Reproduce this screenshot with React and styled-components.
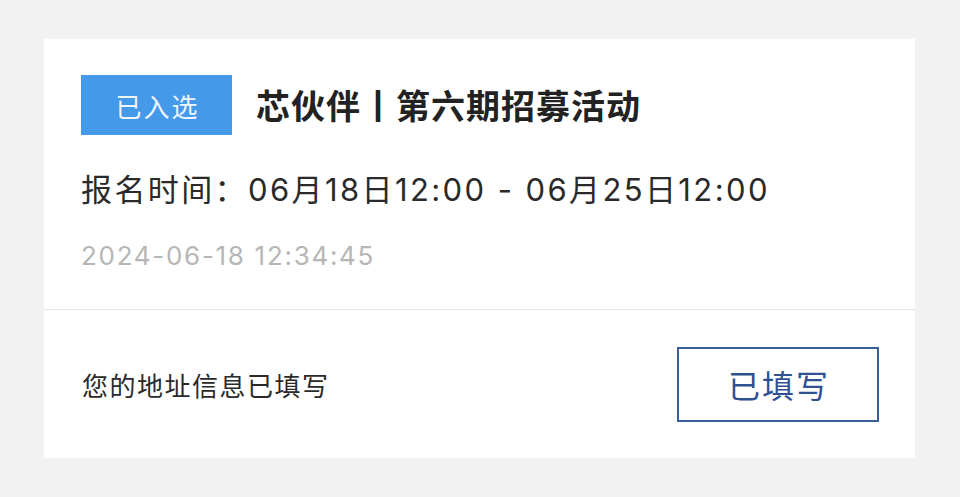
import React from 'react'
import styled, { createGlobalStyle } from 'styled-components'

const GlobalStyle = createGlobalStyle`
  html, body {
    margin: 0;
    padding: 0;
    background: #f2f2f2;
    font-family: "Noto Sans CJK SC", "Noto Sans", sans-serif;
  }
`

const Page = styled.div`
  width: 960px;
  height: 497px;
  padding: 39px 45px 0 44px;
  box-sizing: border-box;
`

const Card = styled.div`
  background: #fff;
  height: 419px;
  display: flex;
  flex-direction: column;
`

const Top = styled.div`
  padding: 36px 37px 0 37px;
  height: 271px;
  box-sizing: border-box;
  border-bottom: 1px solid #e6e6e6;
`

const Header = styled.div`
  display: flex;
  align-items: center;
  gap: 24px;
  height: 60px;
`

const Badge = styled.div`
  width: 151px;
  height: 60px;
  padding-left: 2px;
  box-sizing: border-box;
  background: #4499e9;
  color: #eef6ff;
  font-size: 26px;
  letter-spacing: 2px;
  display: flex;
  align-items: center;
  justify-content: center;
`

const Title = styled.h2`
  margin: 0;
  font-size: 34px;
  letter-spacing: 1px;
  font-weight: 700;
  color: #222;
  line-height: 60px;
`

const Time = styled.div`
  margin-top: 35px;
  font-family: "Inter", "Noto Sans CJK SC", sans-serif;
  font-size: 31px;
  letter-spacing: 2.4px;
  line-height: 40px;
  color: #2a2a2a;
`

const Stamp = styled.div`
  margin-top: 30px;
  font-family: "Inter", "Noto Sans CJK SC", sans-serif;
  font-size: 26px;
  letter-spacing: 1.7px;
  line-height: 32px;
  color: #b6b6b6;
`

const Bottom = styled.div`
  flex: 1;
  display: flex;
  align-items: center;
  justify-content: space-between;
  padding: 0 36px 0 38px;
`

const Note = styled.span`
  font-size: 26px;
  letter-spacing: 1.5px;
  color: #2a2a2a;
`

const Filled = styled.button`
  width: 202px;
  height: 75px;
  box-sizing: border-box;
  background: #fff;
  border: 2px solid #3b5f98;
  color: #2f5192;
  font-family: inherit;
  font-size: 32px;
  letter-spacing: 2px;
  padding: 0 0 0 2px;
  display: flex;
  align-items: center;
  justify-content: center;
`

export default function App() {
  return (
    <Page>
      <GlobalStyle />
      <Card>
        <Top>
          <Header>
            <Badge>已入选</Badge>
            <Title>芯伙伴丨第六期招募活动</Title>
          </Header>
          <Time>报名时间：06月18日12:00 - 06月25日12:00</Time>
          <Stamp>2024-06-18 12:34:45</Stamp>
        </Top>
        <Bottom>
          <Note>您的地址信息已填写</Note>
          <Filled>已填写</Filled>
        </Bottom>
      </Card>
    </Page>
  )
}
